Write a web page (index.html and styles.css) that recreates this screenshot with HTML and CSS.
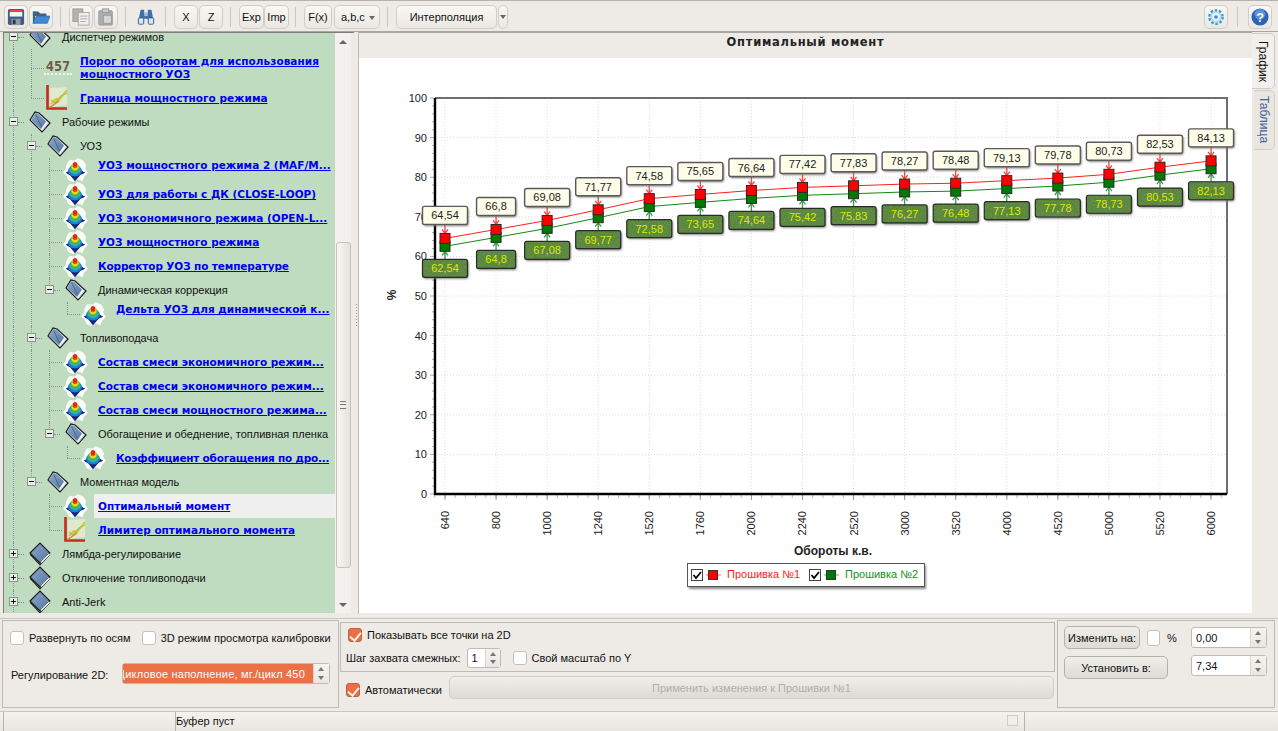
FILE: index.html
```html
<!DOCTYPE html>
<html lang="ru">
<head>
<meta charset="utf-8">
<title>Оптимальный момент</title>
<link rel="stylesheet" href="styles.css">
</head>
<body>
<svg class="defs" aria-hidden="true">
  <defs>
    <linearGradient id="gBlue" x1="0" y1="0" x2="1" y2="1"><stop offset="0" stop-color="#8aa7cc"/><stop offset="1" stop-color="#55779f"/></linearGradient>
    <symbol id="fClosed" viewBox="0 0 22 24">
      <path d="M1 11.500 11 22 21 11.500 21 13 11 23.500 1 13Z" fill="#111"/>
      <path d="M1 11 11 1 21 11 11 21Z" fill="url(#gBlue)" stroke="#1c1c1c" stroke-width="1.100"/>
      <path d="M12 20.500 20.500 12" stroke="#fff" stroke-width="1.400"/>
    </symbol>
    <symbol id="fOpen" viewBox="0 0 22 24">
      <path d="M1 10 6 2 10 3 21 13 13 22Z" fill="#f2f5f8" stroke="#161616" stroke-width="1.200"/>
      <path d="M2 10 6.500 3 9.500 4 17 11.500 12 19Z" fill="url(#gBlue)"/>
      <path d="M6.500 4 12.500 17" stroke="#3f5f88" stroke-width=".8" fill="none"/>
      <path d="M13.500 20.500 19.500 13" stroke="#9fb3c9" stroke-width=".8" fill="none"/>
    </symbol>
    <symbol id="surf" viewBox="0 0 28 28">
      <path d="M5 8 8 3 13 4 17 1 23 4 26 9 25 13 28 17 24 21 22 26 17 24 12 27 7 25 5 20 1 17 4 13Z" fill="#fff" opacity=".9"/>
      <path d="M4 17 9 14 11 9 17 9 20 14 25 17 20 19 14 26 9 20Z" fill="#16237f"/>
      <ellipse cx="14" cy="15" rx="7.500" ry="6" fill="#1f7fd0"/>
      <ellipse cx="14" cy="13.500" rx="6" ry="5" fill="#26b8b0"/>
      <ellipse cx="14" cy="12" rx="5" ry="4.500" fill="#46b83c"/>
      <ellipse cx="14" cy="10.500" rx="3.800" ry="4" fill="#ecd21e"/>
      <ellipse cx="14" cy="8.500" rx="2.500" ry="3.200" fill="#dc2a1c"/>
    </symbol>
    <symbol id="graph" viewBox="0 0 24 26">
      <path d="M5 3 22 2 22 20 5 22Z" fill="#f4f1d8" opacity=".6"/>
      <path d="M6 19 11 14 14 15 22 5" fill="none" stroke="#e8c020" stroke-width="2"/>
      <path d="M6 15 10 18 16 11 22 8" fill="none" stroke="#9ac850" stroke-width="1.300"/>
      <path d="M2.500 0V23.500H22" fill="none" stroke="#c92a1c" stroke-width="2.600"/>
      <path d="M4 23 14 16" stroke="#e07a30" stroke-width="1.300"/>
    </symbol>
    <symbol id="save" viewBox="0 0 20 20">
      <rect x="1" y="1" width="18" height="18" rx="2" fill="#3f5c86"/>
      <rect x="3" y="2" width="14" height="2.500" fill="#e2484a"/>
      <rect x="3" y="4.500" width="14" height="5" fill="#f6f6f6"/>
      <rect x="5" y="12" width="10" height="7" fill="#8f99a6"/>
      <rect x="6.500" y="13" width="3" height="5" fill="#2e3645"/>
    </symbol>
    <symbol id="open" viewBox="0 0 20 20">
      <path d="M1 4H7L9 6H16V9H1Z" fill="#43627f"/>
      <path d="M1 4H3.500V17H1Z" fill="#43627f"/>
      <path d="M5 9H20L17 17H1Z" fill="#3f8ad4" stroke="#35699f" stroke-width=".8"/>
    </symbol>
    <symbol id="copy" viewBox="0 0 20 20">
      <rect x="1" y="1" width="11" height="14" fill="#b2b2b2" stroke="#9a9a9a"/>
      <rect x="7" y="5" width="12" height="14" fill="#efefef" stroke="#a5a5a5"/>
      <path d="M9 9H17M9 12H17M9 15H15" stroke="#a5a5a5"/>
    </symbol>
    <symbol id="paste" viewBox="0 0 20 20">
      <rect x="2" y="3" width="15" height="16" rx="1" fill="#aeaeae" stroke="#979797"/>
      <rect x="6" y="1" width="7" height="4" fill="#cfcfcf" stroke="#979797"/>
      <rect x="7" y="8" width="9" height="9" fill="#d5d5d5" stroke="#979797"/>
    </symbol>
    <symbol id="binoc" viewBox="0 0 20 20">
      <path d="M4 2H8V7H12V2H16L19 17H12.500V12H7.500V17H1Z" fill="#3f6ea8"/>
      <rect x="1.500" y="11" width="6" height="7" rx="1" fill="#dbe6f2" stroke="#2f5688"/>
      <rect x="12.500" y="11" width="6" height="7" rx="1" fill="#dbe6f2" stroke="#2f5688"/>
      <rect x="8" y="5" width="4" height="4" fill="#9cb8d8"/>
    </symbol>
    <symbol id="gear" viewBox="0 0 20 20">
      <circle cx="10" cy="10" r="7" fill="none" stroke="#39a0e0" stroke-width="3.600" stroke-dasharray="2.600 1.800"/>
      <circle cx="10" cy="10" r="5.500" fill="none" stroke="#a8daf5" stroke-width="1.600"/>
      <circle cx="10" cy="10" r="2" fill="#2f8fd6"/>
    </symbol>
  </defs>
</svg>

<header class="toolbar">
  <button class="tb w24"><svg class="ti"><use href="#save"/></svg></button>
  <button class="tb w24"><svg class="ti"><use href="#open"/></svg></button>
  <i class="sep"></i>
  <button class="tb w24"><svg class="ti"><use href="#copy"/></svg></button>
  <button class="tb w24"><svg class="ti"><use href="#paste"/></svg></button>
  <i class="sep"></i>
  <button class="tb w24 flat"><svg class="ti"><use href="#binoc"/></svg></button>
  <i class="sep"></i>
  <button class="tb w24">X</button>
  <button class="tb w24">Z</button>
  <i class="sep"></i>
  <button class="tb w25">Exp</button>
  <button class="tb w25">Imp</button>
  <i class="sep"></i>
  <button class="tb w28">F(x)</button>
  <button class="tb w46 drop">a,b,c</button>
  <i class="sep"></i>
  <button class="tb w101">Интерполяция</button>
  <button class="tb w10 arrow"></button>
  <span class="grow"></span>
  <button class="tb w24"><svg class="ti"><use href="#gear"/></svg></button>
  <i class="sep far"></i>
  <button class="tb w24 help"><svg class="ti" viewBox="0 0 20 20"><circle cx="10" cy="10" r="9.500" fill="#2a62b8"/><circle cx="10" cy="7" r="6" fill="#5c92dc"/><text x="10" y="15" text-anchor="middle" class="qm">?</text></svg></button>
</header>

<main class="main">
  <section class="left">
    <nav class="treebox">
      <div class="tree">
        <div class="row"><i class="c b"><i class="bx"></i></i><svg class="fold"><use href="#fOpen"/></svg><span class="txt">Диспетчер режимов</span></div>
        <div class="row tall"><i class="c v"></i><i class="c t"></i><span class="n457">457</span><a class="lnk two">Порог по оборотам для использования мощностного УОЗ</a></div>
        <div class="row"><i class="c v"></i><i class="c l"></i><svg class="leaf"><use href="#graph"/></svg><a class="lnk">Граница мощностного режима</a></div>
        <div class="row"><i class="c b"><i class="bx"></i></i><svg class="fold"><use href="#fOpen"/></svg><span class="txt">Рабочие режимы</span></div>
        <div class="row"><i class="c v"></i><i class="c b"><i class="bx"></i></i><svg class="fold"><use href="#fOpen"/></svg><span class="txt">УОЗ</span></div>
        <div class="row"><i class="c v"></i><i class="c v"></i><i class="c t"></i><svg class="leaf"><use href="#surf"/></svg><a class="lnk up">УОЗ мощностного режима 2 (MAF/M...</a></div>
        <div class="row"><i class="c v"></i><i class="c v"></i><i class="c t"></i><svg class="leaf"><use href="#surf"/></svg><a class="lnk">УОЗ для работы с ДК (CLOSE-LOOP)</a></div>
        <div class="row"><i class="c v"></i><i class="c v"></i><i class="c t"></i><svg class="leaf"><use href="#surf"/></svg><a class="lnk">УОЗ экономичного режима (OPEN-L...</a></div>
        <div class="row"><i class="c v"></i><i class="c v"></i><i class="c t"></i><svg class="leaf"><use href="#surf"/></svg><a class="lnk">УОЗ мощностного режима</a></div>
        <div class="row"><i class="c v"></i><i class="c v"></i><i class="c t"></i><svg class="leaf"><use href="#surf"/></svg><a class="lnk tight">Корректор УОЗ по температуре</a></div>
        <div class="row"><i class="c v"></i><i class="c v"></i><i class="c b last"><i class="bx"></i></i><svg class="fold"><use href="#fOpen"/></svg><span class="txt">Динамическая коррекция</span></div>
        <div class="row"><i class="c v"></i><i class="c v"></i><i class="c"></i><i class="c l"></i><svg class="leaf"><use href="#surf"/></svg><a class="lnk up">Дельта УОЗ для динамической к...</a></div>
        <div class="row"><i class="c v"></i><i class="c b"><i class="bx"></i></i><svg class="fold"><use href="#fOpen"/></svg><span class="txt">Топливоподача</span></div>
        <div class="row"><i class="c v"></i><i class="c v"></i><i class="c t"></i><svg class="leaf"><use href="#surf"/></svg><a class="lnk">Состав смеси экономичного режим...</a></div>
        <div class="row"><i class="c v"></i><i class="c v"></i><i class="c t"></i><svg class="leaf"><use href="#surf"/></svg><a class="lnk">Состав смеси экономичного режим...</a></div>
        <div class="row"><i class="c v"></i><i class="c v"></i><i class="c t"></i><svg class="leaf"><use href="#surf"/></svg><a class="lnk">Состав смеси мощностного режима...</a></div>
        <div class="row"><i class="c v"></i><i class="c v"></i><i class="c b last"><i class="bx"></i></i><svg class="fold"><use href="#fOpen"/></svg><span class="txt">Обогащение и обеднение, топливная пленка</span></div>
        <div class="row"><i class="c v"></i><i class="c v"></i><i class="c"></i><i class="c l"></i><svg class="leaf"><use href="#surf"/></svg><a class="lnk tight">Коэффициент обогащения по дро...</a></div>
        <div class="row"><i class="c v"></i><i class="c b last"><i class="bx"></i></i><svg class="fold"><use href="#fOpen"/></svg><span class="txt">Моментная модель</span></div>
        <div class="row"><i class="c v"></i><i class="c"></i><i class="c t"></i><svg class="leaf"><use href="#surf"/></svg><a class="lnk sel">Оптимальный момент</a></div>
        <div class="row"><i class="c v"></i><i class="c"></i><i class="c l"></i><svg class="leaf"><use href="#graph"/></svg><a class="lnk">Лимитер оптимального момента</a></div>
        <div class="row"><i class="c b"><i class="bx plus"></i></i><svg class="fold"><use href="#fClosed"/></svg><span class="txt">Лямбда-регулирование</span></div>
        <div class="row"><i class="c b"><i class="bx plus"></i></i><svg class="fold"><use href="#fClosed"/></svg><span class="txt">Отключение топливоподачи</span></div>
        <div class="row"><i class="c b"><i class="bx plus"></i></i><svg class="fold"><use href="#fClosed"/></svg><span class="txt">Anti-Jerk</span></div>
      </div>
    </nav>
    <div class="vscroll">
      <i class="sarrow up"></i>
      <i class="strack"></i>
      <i class="thumb"></i>
      <i class="sarrow down"></i>
    </div>
  </section>
  <div class="splitter"><i class="grip"></i></div>
  <section class="plot">
    <h1 class="title">Оптимальный момент</h1>
    <svg id="chart" class="chart" viewBox="359 58 893 555" width="893" height="555"></svg>
  </section>
  <aside class="tabs">
    <span class="tab active">График</span>
    <span class="tab">Таблица</span>
  </aside>
</main>

<section class="bottom">
  <div class="box lbox">
    <div class="lrow">
      <label class="chk"><i class="cb"></i>Развернуть по осям</label>
      <label class="chk"><i class="cb"></i>3D режим просмотра калибровки</label>
    </div>
    <div class="lrow2">
      <span class="rlabel">Регулирование 2D:</span>
      <div class="spin sel2"><span class="selval">Цикловое наполнение, мг./цикл 450</span><i class="arrows"></i></div>
    </div>
  </div>
  <div class="mid">
    <div class="box sub">
      <label class="chk"><i class="cb on"></i>Показывать все точки на 2D</label>
      <div class="srow">
        <span>Шаг захвата смежных:</span>
        <div class="spin s34"><span class="val">1</span><i class="arrows"></i></div>
        <label class="chk"><i class="cb"></i>Свой масштаб по Y</label>
      </div>
    </div>
    <div class="arow">
      <label class="chk"><i class="cb on"></i>Автоматически</label>
      <button class="btn apply" disabled>Применить изменения к Прошивки №1</button>
    </div>
  </div>
  <div class="box rbox">
    <div class="rcell">
      <button class="btn w76">Изменить на:</button>
      <i class="cb small"></i><span>%</span>
    </div>
    <div class="spin s76"><span class="val">0,00</span><i class="arrows"></i></div>
    <div class="rcell"><button class="btn w104">Установить в:</button></div>
    <div class="spin s76 second"><span class="val">7,34</span><i class="arrows"></i></div>
  </div>
</section>

<footer class="status">
  <span class="st first"></span>
  <span class="st msg">Буфер пуст</span>
  <i class="stbox"></i>
  <span class="st end"></span>
</footer>
<script src="chart.js"></script>
</body>
</html>
```
FILE: styles.css
```css
* { box-sizing: border-box; }
html, body { margin: 0; padding: 0; }
body {
  width: 1278px; height: 731px; overflow: hidden;
  background: #eeebe6; color: #111;
  font: 11px "Liberation Sans", Arial, sans-serif;
  display: flex; flex-direction: column;
}
.defs { position: absolute; width: 0; height: 0; }

/* toolbar */
.toolbar {
  height: 32px; flex: none; display: flex; align-items: center;
  padding: 1px 5px 0 4px; border-top: 1px solid #b5b3ad; border-bottom: 1px solid #a9a7a2;
}
.tb {
  height: 24px; padding: 0; margin: 0 1px 0 0; flex: none;
  font: 11px "Liberation Sans", sans-serif; color: #111;
  border: 1px solid #d0cec8; border-radius: 5px;
  background: linear-gradient(#f8f7f4, #ebe8e2);
  display: flex; align-items: center; justify-content: center;
}
.tb.flat { border-color: transparent; background: none; }
.ti { width: 18px; height: 18px; }
.qm { font: bold 14px "Liberation Sans", sans-serif; fill: #fff; }
.w24 { width: 24px; } .w25 { width: 25px; margin-right: 0; } .w28 { width: 28px; margin-right: 2px; }
.w46 { width: 46px; } .w101 { width: 101px; } .w10 { width: 10px; }
.drop { justify-content: flex-start; padding-left: 6px; position: relative; }
.drop::after, .arrow::after {
  content: ""; border: 3px solid transparent; border-top: 4px solid #666; border-bottom: 0;
}
.drop::after { position: absolute; right: 4px; top: 10px; }
.sep { width: 1px; height: 20px; background: #c8c6c0; margin: 0 8px 0 6px; flex: none; }
.sep.far { margin: 0 10px 0 8px; }
.grow { flex: 1; }

/* main */
.main { height: 586px; flex: none; display: flex; }
.left { width: 351px; flex: none; height: 581px; margin-left: 3px; display: flex; border-top: 1px solid #7d7d7d; border-left: 1px solid #7d7d7d; }
.treebox { width: 331px; height: 100%; flex: none; background: #bfdcc0; overflow: hidden; }
.tree { margin: -8px 0 0 -4px; width: 335px; }
.row { height: 24px; display: flex; align-items: center; }
.row.tall { height: 37px; }
.c { width: 18px; height: 100%; flex: none; position: relative; display: block; }
.v::before, .t::before, .l::before, .b::before {
  content: ""; position: absolute; left: 13px; top: 0; bottom: 0; border-left: 1px dotted #85938a;
}
.l::before, .b.last::before { bottom: 50%; }
.t::after, .l::after, .b::after {
  content: ""; position: absolute; left: 13px; top: 50%; width: 13px; border-top: 1px dotted #85938a;
}
.b::after { left: 18px; width: 6px; }
.bx {
  position: absolute; left: 9px; top: 7px; width: 9px; height: 9px; z-index: 1;
  background: #e9eee6; border: 1px solid #8a9489;
}
.bx::before { content: ""; position: absolute; left: 1px; top: 3px; width: 5px; height: 1px; background: #111; }
.plus::after { content: ""; position: absolute; left: 3px; top: 1px; width: 1px; height: 5px; background: #111; }
.fold { width: 22px; height: 24px; flex: none; margin: 0 7px 0 11px; }
.leaf { width: 26px; height: 26px; flex: none; margin: 0 6px 0 8px; overflow: visible; }
.n457 {
  width: 28px; margin: 0 4px 0 8px; flex: none; line-height: 13px; text-align: center;
  font-family: "DejaVu Sans Mono", monospace; font-weight: bold; font-size: 13.5px; color: #6d5b42;
  border-bottom: 2px dotted #f4f4f0;
}
.txt { padding-left: 4px; white-space: nowrap; }
.lnk {
  flex: 1; min-width: 0; align-self: stretch; display: flex; align-items: center;
  padding-left: 4px; white-space: nowrap;
  font: bold 10.5px "DejaVu Sans", sans-serif; color: #0000f0; text-decoration: underline;
}
.lnk.two { display: block; align-self: center; white-space: normal; line-height: 13px; padding-right: 12px; letter-spacing: .05px; }
.lnk.up { padding-bottom: 10px; }
.lnk.sel { background: #efefef; }
.lnk.tight { letter-spacing: -.12px; }
.row:nth-child(18) .lnk.tight { letter-spacing: -.24px; }

.vscroll { width: 16px; flex: none; background: #f3f1ed; display: flex; flex-direction: column; align-items: center; }
.sarrow { flex: none; margin: 7px 0; border: 3px solid transparent; border-left-width: 4px; border-right-width: 4px; }
.sarrow.up { border-top: 0; border-bottom: 4px solid #666; }
.sarrow.down { border-bottom: 0; border-top: 4px solid #666; margin: auto 0 6px; }
.strack { height: 191px; flex: none; }
.thumb {
  width: 15px; height: 326px; flex: none; border: 1px solid #c4c2bd; border-radius: 3px;
  background: linear-gradient(90deg, #f7f6f3, #e4e2dc);
  display: flex; align-items: center; justify-content: center;
}
.thumb::after { content: ""; width: 6px; height: 6px; border-top: 1px solid #777; border-bottom: 1px solid #777; background: linear-gradient(#0000 2px, #777 2px, #777 3px, #0000 3px); }

.splitter { width: 4px; flex: none; display: flex; align-items: center; justify-content: center; height: 581px; }
.grip { width: 1px; height: 24px; margin-bottom: 14px; background: repeating-linear-gradient(#999 0 1px, #0000 1px 3px); }
.plot { width: 894px; flex: none; height: 582px; border-top: 1px solid #a9a7a2; border-left: 1px solid #bdbbb6; display: flex; flex-direction: column; background: #eeebe6; }
.title {
  margin: 0; height: 25px; flex: none; text-align: center;
  font: bold 11.5px/18px "DejaVu Sans", sans-serif; color: #222; letter-spacing: .72px;
}
.chart { display: block; flex: none; background: #fff; }

.ax { font: 11px "Liberation Sans", sans-serif; fill: #222; }
.axb { font: bold 12px "Liberation Sans", sans-serif; fill: #222; }
.lb1 { font: 11px "Liberation Sans", sans-serif; fill: #222; text-anchor: middle; }
.lb2 { font: 11px "Liberation Sans", sans-serif; fill: #dbe800; text-anchor: middle; }
.lg1 { font: 11px "Liberation Sans", sans-serif; fill: #ff1a1a; }
.lg2 { font: 11px "Liberation Sans", sans-serif; fill: #1c8c1c; }

.tabs { width: 26px; flex: none; padding-top: 1px; display: flex; flex-direction: column; align-items: flex-start; }
.tab {
  writing-mode: vertical-rl; width: 21px; height: 60px; margin-left: 2px; font-size: 12px;
  display: flex; align-items: center; justify-content: center;
  color: #44629c; border: 1px solid #cfcdc8; border-left: 0; border-radius: 0 5px 5px 0;
  background: #e9e6e0;
}
.tab.active { width: 23px; height: 56px; margin-left: 0; color: #111; background: #f2f0ec; margin-bottom: 1px; }

/* bottom */
.bottom { height: 91px; flex: none; display: flex; padding: 0 3px 0 2px; gap: 1px; border-top: 1px solid #c8c6c0; }
.box { border: 1px solid #bdbbb4; }
.lbox { width: 337px; height: 88px; flex: none; padding: 10px 0 0 7px; margin-top: 1px; }
.lrow { display: flex; gap: 11px; }
.lrow2 { display: flex; align-items: center; margin-top: 18px; }
.rlabel { width: 112px; flex: none; padding: 3px 0 0 1px; }
.chk { display: flex; align-items: center; gap: 5px; white-space: nowrap; }
.cb {
  width: 14px; height: 14px; flex: none; display: block; position: relative;
  background: #fff; border: 1px solid #c2c0ba; border-radius: 3px;
}
.cb.small { width: 13px; height: 16px; margin: 0 7px; }
.cb.on { background: #ea6f45; border-color: #b9623f; }
.cb.on::after {
  content: ""; position: absolute; left: 3px; top: 1px; width: 5px; height: 9px;
  border: solid #f7f2ea; border-width: 0 2px 2px 0; transform: rotate(40deg);
}
.spin {
  display: flex; height: 21px; background: #fff; border: 1px solid #bdbbb4; border-radius: 3px; flex: none;
  align-items: center;
}
.val { flex: 1; padding-left: 4px; }
.arrows {
  width: 16px; height: 100%; flex: none; position: relative; border-left: 1px solid #d8d6d0;
  background: linear-gradient(#f4f3ef, #e9e7e1);
}
.arrows::before, .arrows::after {
  content: ""; position: absolute; left: 4px; border: 3px solid transparent; border-left-width: 3px; border-right-width: 3px;
}
.arrows::before { top: 3px; border-top: 0; border-bottom: 4px solid #777; }
.arrows::after { bottom: 3px; border-bottom: 0; border-top: 4px solid #777; }
.sel2 { width: 208px; }
.selval {
  flex: 1; min-width: 0; align-self: stretch; display: flex; align-items: center; overflow: hidden; white-space: nowrap;
  background: #ec7045; color: #fff; justify-content: flex-end; padding-right: 8px; letter-spacing: .2px;
}
.mid { width: 716px; flex: none; padding-top: 3px; }
.sub { height: 50px; width: 715px; padding: 5px 0 0 7px; }
.srow { display: flex; align-items: center; margin: 6px 0 0 -2px; }
.s34 { width: 34px; height: 20px; margin: 0 12px 0 6px; }
.s34 .arrows { width: 15px; }
.arow { display: flex; align-items: center; margin-top: 4px; padding-left: 6px; gap: 0; }
.arow .chk { width: 103px; margin-top: 5px; }
.btn {
  font: 11px "Liberation Sans", sans-serif; color: #111; padding: 0;
  border: 1px solid #b3b1aa; border-radius: 5px; background: linear-gradient(#f0eeea, #dddbd5); height: 23px; flex: none;
}
.apply { width: 605px; color: #b0aea9; border-color: #cfcdc7; }
.rbox {
  width: 218px; height: 88px; flex: none; margin-top: 1px; padding: 5px 0 0 6px;
  display: grid; grid-template-columns: 127px 76px; grid-template-rows: 23px 23px; row-gap: 7px; align-items: start;
}
.rcell { display: flex; align-items: center; }
.w76 { width: 76px; } .w104 { width: 104px; }
.s76 { width: 76px; margin-top: 1px; }
.s76.second { margin-top: -1px; }

/* status */
.status {
  flex: 1; display: flex; align-items: center; position: relative;
  background: linear-gradient(#f5f3ef, #e9e6e0); border-top: 1px solid #c8c6c0; margin-top: 2px;
}
.st { height: 100%; display: flex; align-items: center; border-left: 1px solid #b5b3ad; padding-bottom: 2px; }
.first { width: 172px; margin-left: 3px; }
.msg { width: 832px; }
.stbox { width: 11px; height: 11px; flex: none; background: #f1efea; border: 1px solid #cfcdc8; margin: 0 6px 2px 0; }
.end { flex: 1; }
```
FILE: chart.js
```js
(function () {
  var NS = 'http://www.w3.org/2000/svg';
  var svg = document.getElementById('chart');
  function el(name, attrs, text, parent) {
    var e = document.createElementNS(NS, name);
    for (var k in attrs) e.setAttribute(k, attrs[k]);
    if (text !== undefined && text !== null) e.textContent = text;
    (parent || svg).appendChild(e);
    return e;
  }
  var rpm = [640, 800, 1000, 1240, 1520, 1760, 2000, 2240, 2520, 3000, 3520, 4000, 4520, 5000, 5520, 6000];
  var a = ['64,54', '66,8', '69,08', '71,77', '74,58', '75,65', '76,64', '77,42', '77,83', '78,27', '78,48', '79,13', '79,78', '80,73', '82,53', '84,13'];
  var b = ['62,54', '64,8', '67,08', '69,77', '72,58', '73,65', '74,64', '75,42', '75,83', '76,27', '76,48', '77,13', '77,78', '78,73', '80,53', '82,13'];
  var L = 435, R = 1227, T = 98, B = 494;
  function X(i) { return 445 + i * 51.07; }
  function Y(v) { return B - v * 3.96; }
  function num(s) { return parseFloat(s.replace(',', '.')); }

  var defs = el('defs', {});
  var f = el('filter', { id: 'grass', x: '0', y: '0', width: '1', height: '1' }, null, defs);
  el('feTurbulence', { type: 'fractalNoise', baseFrequency: '.75', numOctaves: '2', seed: '4', result: 'n' }, null, f);
  el('feColorMatrix', { 'in': 'n', type: 'matrix', values: '0 0 0 0 .14  0 0 0 0 .28  0 0 0 0 .08  0 0 0 2.6 -.9', result: 'c' }, null, f);
  el('feComposite', { 'in': 'c', in2: 'SourceAlpha', operator: 'in', result: 't' }, null, f);
  var m = el('feMerge', {}, null, f);
  el('feMergeNode', { 'in': 'SourceGraphic' }, null, m);
  el('feMergeNode', { 'in': 't' }, null, m);
  var blur = el('filter', { id: 'soft', x: '-10%', y: '-10%', width: '120%', height: '130%' }, null, defs);
  el('feGaussianBlur', { stdDeviation: '1' }, null, blur);

  // grid
  var v, i, x;
  for (v = 10; v < 100; v += 10) {
    el('line', { x1: L, x2: R, y1: Y(v), y2: Y(v), stroke: '#dcdcdc', 'stroke-dasharray': '1 2' });
  }
  for (i = 0; i < 16; i++) {
    el('line', { x1: X(i), x2: X(i), y1: T, y2: B, stroke: '#dcdcdc', 'stroke-dasharray': '1 2' });
  }
  // ticks
  for (v = 0; v <= 100; v += 2) {
    el('line', { x1: v % 10 ? 432 : 430, x2: 434, y1: Y(v), y2: Y(v), stroke: '#aaa' });
  }
  for (x = 445 - 51.07 / 5; x < R; x += 51.07 / 5) {
    el('line', { x1: x, x2: x, y1: 495, y2: 498, stroke: '#bbb' });
  }
  for (i = 0; i < 16; i++) el('line', { x1: X(i), x2: X(i), y1: 495, y2: 500, stroke: '#999' });
  // frame
  el('path', { d: 'M' + L + ' ' + T + 'H' + R + 'V' + B, fill: 'none', stroke: '#6e6e6e', 'stroke-width': 2 });
  el('path', { d: 'M' + L + ' ' + T + 'V' + B + 'H' + R, fill: 'none', stroke: '#000', 'stroke-width': 2.4 });

  // axis labels
  for (v = 0; v <= 100; v += 10) el('text', { x: 427, y: Y(v) + 4, 'text-anchor': 'end', 'class': 'ax' }, String(v));
  rpm.forEach(function (r, i) {
    var px = X(i) + 4;
    el('text', { x: px, y: 511, 'text-anchor': 'end', transform: 'rotate(-90 ' + px + ' 511)', 'class': 'ax' }, String(r));
  });
  el('text', { x: 833, y: 555, 'text-anchor': 'middle', 'class': 'axb' }, 'Обороты к.в.');
  el('text', { x: 396, y: 295, 'text-anchor': 'middle', transform: 'rotate(-90 396 295)', 'class': 'axb' }, '%');

  // lines
  function pts(arr) { return arr.map(function (s, i) { return X(i) + ',' + Y(num(s)); }).join(' '); }
  el('polyline', { points: pts(a), fill: 'none', stroke: '#ff2020', 'stroke-width': 1 });
  el('polyline', { points: pts(b), fill: 'none', stroke: '#108a10', 'stroke-width': 1 });

  function labelW(s) { return s.length > 4 ? 45 : 39; }
  // arrows + labels
  a.forEach(function (s, i) {
    var cx = X(i), yy = Y(num(s)), w = labelW(s), top = yy - 32;
    el('path', { d: 'M' + cx + ' ' + (top + 18) + 'V' + (yy - 5) + 'M' + (cx - 3) + ' ' + (yy - 9) + 'L' + cx + ' ' + (yy - 5) + 'L' + (cx + 3) + ' ' + (yy - 9), fill: 'none', stroke: '#ff4040', 'stroke-width': 1.3 });
    el('rect', { x: cx - w / 2 + 1, y: top + 1.5, width: w, height: 18, rx: 2, fill: '#777', filter: 'url(#soft)' });
    el('rect', { x: cx - w / 2, y: top, width: w, height: 18, rx: 2, fill: '#fdfde9', stroke: '#5a5a5a', 'stroke-width': 1.4 });
    el('text', { x: cx, y: top + 13, 'class': 'lb1' }, s);
  });
  b.forEach(function (s, i) {
    var cx = X(i), yy = Y(num(s)), w = labelW(s), top = yy + 13;
    el('path', { d: 'M' + cx + ' ' + top + 'V' + (yy + 5) + 'M' + (cx - 3) + ' ' + (yy + 9) + 'L' + cx + ' ' + (yy + 5) + 'L' + (cx + 3) + ' ' + (yy + 9), fill: 'none', stroke: '#3c9a50', 'stroke-width': 1.3 });
    el('rect', { x: cx - w / 2 + 1, y: top + 1.5, width: w, height: 18, rx: 2, fill: '#777', filter: 'url(#soft)' });
    el('rect', { x: cx - w / 2, y: top, width: w, height: 18, rx: 2, fill: '#568539', filter: 'url(#grass)' });
    el('rect', { x: cx - w / 2, y: top, width: w, height: 18, rx: 2, fill: 'none', stroke: '#2a2a2a', 'stroke-width': 1.2 });
    el('text', { x: cx, y: top + 13, 'class': 'lb2' }, s);
  });
  // markers
  b.forEach(function (s, i) { el('rect', { x: X(i) - 5, y: Y(num(s)) - 5, width: 10, height: 10, fill: '#007a00', stroke: '#2a2a2a' }); });
  a.forEach(function (s, i) { el('rect', { x: X(i) - 5, y: Y(num(s)) - 5, width: 10, height: 10, fill: '#ff0000', stroke: '#2a2a2a' }); });

  // legend
  el('rect', { x: 689, y: 565, width: 237, height: 24, fill: '#888', filter: 'url(#soft)' });
  el('rect', { x: 687.5, y: 563.5, width: 237, height: 23, fill: '#fff', stroke: '#555', 'stroke-width': 1 });
  function legend(cbx, col, tx, label, cls) {
    el('rect', { x: cbx + 0.5, y: 569.5, width: 11, height: 11, fill: '#fff', stroke: '#444' });
    el('path', { d: 'M' + (cbx + 2.5) + ' 575 l2.500 3 l5 -6', fill: 'none', stroke: '#000', 'stroke-width': 1.8 });
    el('line', { x1: cbx + 15, x2: cbx + 30, y1: 575, y2: 575, stroke: col, opacity: .6 });
    el('rect', { x: cbx + 17.5, y: 570.5, width: 9, height: 9, fill: col, stroke: '#333' });
    el('text', { x: tx, y: 578, 'class': cls }, label);
  }
  legend(691, '#ff0000', 727, 'Прошивка №1', 'lg1');
  legend(809, '#007a00', 845, 'Прошивка №2', 'lg2');
})();
```
